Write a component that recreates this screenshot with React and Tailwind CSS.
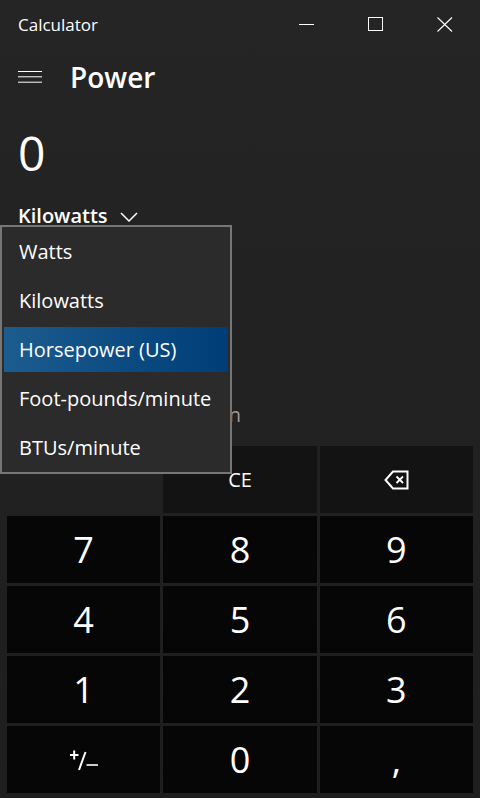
const keys = ["7", "8", "9", "4", "5", "6", "1", "2", "3"];

const units = ["Watts", "Kilowatts", "Horsepower (US)", "Foot-pounds/minute", "BTUs/minute"];

function Chevron() {
  return (
    <svg width="18" height="10" viewBox="0 0 18 10" fill="none" stroke="white" strokeWidth="1.5">
      <path d="M1 1 L9 9 L17 1" />
    </svg>
  );
}

function Backspace() {
  return (
    <svg width="25" height="20" viewBox="0 0 25 20" fill="none" stroke="white" strokeWidth="2">
      <path d="M9 1.5 H23.5 V18.5 H9 L1.5 10 Z" strokeLinejoin="miter" />
      <path d="M12.5 6.5 L19 13 M19 6.5 L12.5 13" strokeWidth="1.8" />
    </svg>
  );
}

function PlusMinus() {
  return (
    <svg width="32" height="26" viewBox="0 0 32 26" fill="none" stroke="white" strokeWidth="2">
      <path d="M2 8 H10.5 M6.2 3.5 V12.5" />
      <path d="M17.5 5 L11 23" />
      <path d="M18.5 18 H30" strokeWidth="1.6" />
    </svg>
  );
}

export default function App() {
  return (
    <div
      className="relative flex h-[798px] w-[480px] flex-col overflow-hidden bg-linear-to-b from-[#252525] to-[#1e1e1e] text-white"
      style={{ fontFamily: '"Open Sans", "Noto Sans", sans-serif' }}
    >
      {/* title bar */}
      <div className="flex h-12 items-center">
        <div className="pl-[18px] text-[17px] leading-none">Calculator</div>
        <div className="ml-auto flex pr-px">
          <div className="flex h-12 w-[69px] items-center justify-center">
            <div className="h-px w-[15px] bg-white" />
          </div>
          <div className="flex h-12 w-[69px] items-center justify-center">
            <div className="h-[14px] w-[15px] border border-white" />
          </div>
          <div className="flex h-12 w-[69px] items-center justify-center">
            <svg width="16" height="15" viewBox="0 0 16 15" stroke="white" strokeWidth="1.1">
              <path d="M0.5 0.5 L15 14.5 M15 0.5 L0.5 14.5" />
            </svg>
          </div>
        </div>
      </div>

      {/* header */}
      <div className="flex h-[58px] items-center pl-[18px]">
        <svg width="24" height="12" viewBox="0 0 24 12" stroke="white" strokeWidth="1">
          <path d="M0 0.5 H24 M0 5.8 H24 M0 11.2 H24" />
        </svg>
        <div className="ml-[28px] text-[28px] font-semibold leading-none">Power</div>
      </div>

      {/* converter values */}
      <div className="flex h-[340px] flex-col pl-[18px]">
        <div className="mt-[23px] text-[48px] leading-none">0</div>
        <div className="mt-[29px] flex items-center">
          <span className="text-[20px] font-semibold leading-none">Kilowatts</span>
          <span className="ml-[12px] mt-[2px]">
            <Chevron />
          </span>
        </div>
        <div className="mt-[179px] w-[223px] whitespace-nowrap text-right text-[20px] leading-none text-[#9c9c9c]">
          min
        </div>
      </div>

      {/* keypad */}
      <div className="mx-[7px] grid grid-cols-3 gap-[3px]">
        <div className="h-[67px]" />
        <div className="flex h-[67px] items-center justify-center bg-[#131313] text-[20px] leading-none">CE</div>
        <div className="flex h-[67px] items-center justify-center bg-[#131313]">
          <Backspace />
        </div>
        {keys.map((k) => (
          <div
            key={k}
            className="flex h-[67px] items-center justify-center bg-[#060606] text-[36px] font-medium leading-none"
          >
            {k}
          </div>
        ))}
        <div className="flex h-[67px] items-center justify-center bg-[#060606]">
          <PlusMinus />
        </div>
        <div className="flex h-[67px] items-center justify-center bg-[#060606] text-[36px] font-medium leading-none">
          0
        </div>
        <div className="flex h-[67px] items-center justify-center bg-[#060606] text-[36px] font-medium leading-none">
          ,
        </div>
      </div>

      {/* unit dropdown */}
      <div className="absolute left-0 top-[225px] w-[232px] border-2 border-[#767676] bg-[#2b2b2b]">
        {units.map((u) => (
          <div key={u} className="h-[49px] px-[2px] py-[2px]">
            <div
              className={
                u === "Horsepower (US)"
                  ? "flex h-full items-center bg-linear-to-r from-[#1c5c8e] to-[#003d77] pl-[15px] text-[20px] leading-none"
                  : "flex h-full items-center pl-[15px] text-[20px] leading-none"
              }
            >
              {u}
            </div>
          </div>
        ))}
      </div>
    </div>
  );
}
